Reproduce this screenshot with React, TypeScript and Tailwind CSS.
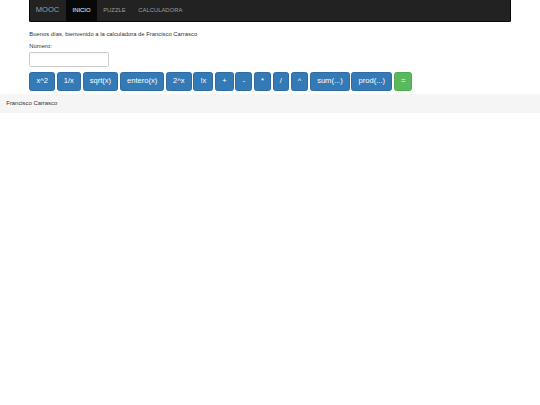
const ops = [
  "x^2",
  "1/x",
  "sqrt(x)",
  "entero(x)",
  "2^x",
  "!x",
  "+",
  "-",
  "*",
  "/",
  "^",
  "sum(...)",
  "prod(...)",
];

export default function App() {
  return (
    <div className="min-h-screen bg-white text-[#333] font-['Liberation_Sans',Arial,sans-serif] text-[5.88px] leading-[8.4px]">
      <div className="mx-auto w-[494px] px-[6.3px]">
        {/* Navbar */}
        <nav className="flex h-[21.5px] items-stretch rounded-b-[1.7px] border border-t-0 border-[#080808] bg-[#222]">
          <a className="flex items-center pl-[5.5px] pr-[7px] text-[7.56px] text-[#9d9d9d]">MOOC</a>
          <a className="flex items-center bg-[#080808] px-[6.3px] text-white">INICIO</a>
          <a className="flex items-center px-[6.3px] text-[#9d9d9d]">PUZZLE</a>
          <a className="flex items-center px-[6.3px] text-[#9d9d9d]">CALCULADORA</a>
        </nav>

        {/* Content */}
        <div className="pt-[8.4px]">
          <p className="mb-[4px]">Buenos días, bienvenido a la calculadora de Francisco Carrasco</p>
          <label className="block mb-[0.8px]">Número:</label>
          <input
            type="text"
            className="block h-[15.6px] w-[80px] rounded-[1.7px] border border-[#ccc] bg-white shadow-[inset_0_0.4px_0.4px_rgba(0,0,0,0.075)] outline-none"
          />
          <div className="mt-[4.6px] flex gap-[1.7px]">
            {ops.map((op) => (
              <button
                key={op}
                className="h-[19px] rounded-[2.5px] border border-[#2e6da4] bg-[#337ab7] px-[6.1px] text-[7.56px] leading-[10px] text-white"
              >
                {op}
              </button>
            ))}
            <button className="h-[19px] rounded-[2.5px] border border-[#4cae4c] bg-[#5cb85c] px-[6.1px] text-[7.56px] leading-[10px] text-white">
              =
            </button>
          </div>
        </div>
      </div>

      {/* Footer */}
      <footer className="mt-[3.6px] flex h-[18.4px] items-center bg-[#f5f5f5] px-[6.3px]">
        Francisco Carrasco
      </footer>
    </div>
  );
}
